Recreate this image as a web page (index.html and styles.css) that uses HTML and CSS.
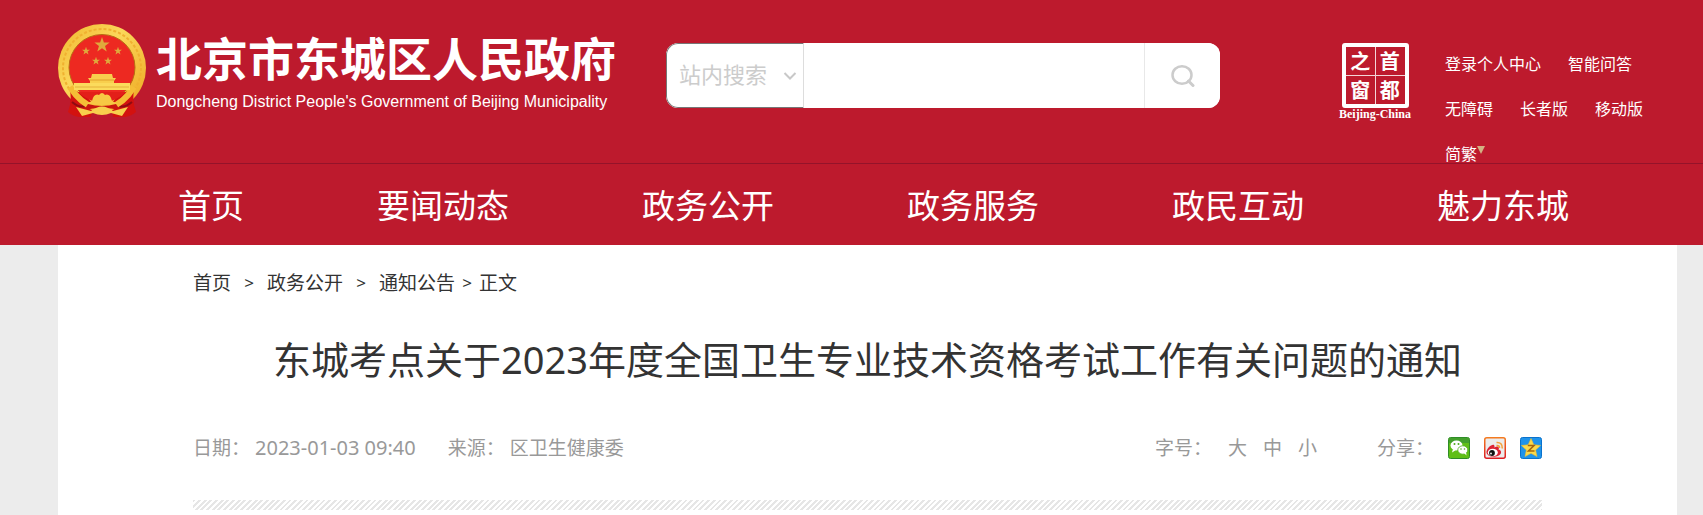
FILE: index.html
```html
<!DOCTYPE html>
<html lang="zh-CN">
<head>
<meta charset="utf-8">
<title>东城考点关于2023年度全国卫生专业技术资格考试工作有关问题的通知</title>
<link rel="stylesheet" href="styles.css">
</head>
<body>
<header class="site-header">
  <div class="header-top">
    <a class="brand" href="#">
      <svg class="emblem" viewBox="0 0 88 93" aria-hidden="true">
        <defs>
          <linearGradient id="gold" x1="0" y1="0" x2="1" y2="1">
            <stop offset="0" stop-color="#f0b62c"/><stop offset=".4" stop-color="#fbd75a"/><stop offset="1" stop-color="#eda61f"/>
          </linearGradient>
          <polygon id="star" points="0,-10 2.4,-3.2 9.5,-3.1 3.8,1.2 5.9,8.1 0,4 -5.9,8.1 -3.8,1.2 -9.5,-3.1 -2.4,-3.2"/>
        </defs>
        <circle cx="44" cy="44" r="44" fill="url(#gold)"/>
        <circle cx="44" cy="44" r="39" fill="none" stroke="#f0b030" stroke-width="2" stroke-dasharray="3 2"/>
        <path d="M12 66 Q26 67 35 80 L33 93 Q18 95 10 88 Q14 78 12 66 M76 66 Q62 67 53 80 L55 93 Q70 95 78 88 Q74 78 76 66" fill="#d3120f"/>
        <path d="M14 78 q7 6 13 4 M74 78 q-7 6 -13 4" fill="none" stroke="#8f0b12" stroke-width="2"/>
        <path d="M12 63 Q23 80 37 84 M76 63 Q65 80 51 84" fill="none" stroke="#f5bd36" stroke-width="6"/>
        <circle cx="44" cy="43.500" r="33" fill="#ed2921" stroke="#b96c13"/>
        <g fill="#dfa93c">
          <use href="#star" transform="translate(44 21) scale(.8)"/>
          <use href="#star" transform="translate(28 27) scale(.42)"/>
          <use href="#star" transform="translate(60 27) scale(.42)"/>
          <use href="#star" transform="translate(38 37) scale(.42)"/>
          <use href="#star" transform="translate(50 37) scale(.42)"/>
        </g>
        <path d="M34 50 h20 l1 4 h3 l-2 3 v3 h3 v5 H29 v-5 h3 v-3 l-2 -3 h3z" fill="#f8cf4d"/>
        <path d="M32 56 h24 M31 61 h26" stroke="#e0a02c"/>
        <path d="M16 59 H72 V66 H16z" fill="#fbdb5c"/><path d="M17 63 H71" stroke="#e5b03a"/>
        <path d="M20 68 H68 Q58 78 44 78 Q30 78 20 68z" fill="#e31f19"/>
        <path d="M34 77 Q36 69 41 71 Q44 67 47 71 Q52 69 54 77 L60 80 Q44 82 28 80z" fill="#f7c844"/>
        <path d="M30 80 Q44 84 58 80 L62 86 Q44 82 26 86z" fill="#c9160f"/>
        <path d="M18 83 L33 87 Q44 78 55 87 L70 83 L64 92 L53 89 Q44 93 35 89 L24 92z" fill="#f8cf4d"/>
      </svg>
      <span class="brand-text">
        <span class="brand-cn">北京市东城区人民政府</span>
        <span class="brand-en">Dongcheng District People's Government of Beijing Municipality</span>
      </span>
    </a>
    <form class="search" role="search">
      <span class="search-scope">
        <select class="scope-select" aria-label="搜索范围"><option>站内搜索</option></select>
        <svg class="chevron" viewBox="0 0 14 8" aria-hidden="true"><path d="M1.500 1 L7 6.500 L12.500 1" fill="none" stroke="#c8c8c8" stroke-width="2"/></svg>
      </span>
      <input class="search-input" type="text" aria-label="搜索关键词">
      <button class="search-button" type="button" aria-label="搜索">
        <svg class="search-icon" viewBox="0 0 24 24" aria-hidden="true"><ellipse cx="11" cy="11" rx="9.500" ry="8.800" fill="none" stroke="#ccc" stroke-width="2.500"/><path d="M17.500 17 L22 21.500" stroke="#ccc" stroke-width="3" stroke-linecap="round"/></svg>
      </button>
    </form>
    <a class="capital" href="#" aria-label="首都之窗">
      <span class="capital-grid"><span>之</span><span>首</span><span>窗</span><span>都</span></span>
      <span class="capital-en">Beijing-China</span>
    </a>
    <nav class="tools" aria-label="工具">
      <a href="#">登录个人中心</a>
      <a href="#">智能问答</a>
      <a href="#">无障碍</a>
      <a href="#">长者版</a>
      <a href="#">移动版</a>
      <a class="lang" href="#">简繁<svg class="lang-arrow" viewBox="0 0 8 8" aria-hidden="true"><path d="M0 0H8L4 8z" fill="#d3b283"/></svg></a>
    </nav>
  </div>
  <nav class="main-nav" aria-label="主导航">
    <a href="#">首页</a>
    <a href="#">要闻动态</a>
    <a href="#">政务公开</a>
    <a href="#">政务服务</a>
    <a href="#">政民互动</a>
    <a href="#">魅力东城</a>
  </nav>
</header>
<main class="page">
  <nav class="crumbs" aria-label="当前位置">
    <a href="#">首页</a><span class="sep">&gt;</span><a href="#">政务公开</a><span class="sep">&gt;</span><a href="#">通知公告</a><span class="sep sep-last">&gt;</span><span>正文</span>
  </nav>
  <h1 class="title">东城考点关于2023年度全国卫生专业技术资格考试工作有关问题的通知</h1>
  <div class="meta">
    <span class="meta-item">日期：<time class="date" datetime="2023-01-03T09:40">2023-01-03 09:40</time></span>
    <span class="meta-item">来源：<span>区卫生健康委</span></span>
    <span class="sizes">字号：<button type="button">大</button><button type="button">中</button><button type="button">小</button></span>
    <span class="share">分享：
      <a href="#" aria-label="微信">
        <svg viewBox="0 0 22 22"><rect x=".5" y=".5" width="21" height="21" rx="2" fill="#5fbf16" stroke="#2f8d27"/><path d="M1 1h20v5H1z" fill="#43a02c"/><ellipse cx="8.500" cy="8.500" rx="6" ry="5" fill="#fff"/><path d="M5 12 L4 15.500 L8 13z" fill="#fff"/><ellipse cx="14.800" cy="13" rx="5" ry="4.200" fill="#fff" stroke="#4eac1c" stroke-width=".8"/><path d="M16 16 L18.500 18.500 L18 15z" fill="#fff"/><g fill="#4eac1c"><circle cx="6.500" cy="7" r="1"/><circle cx="10.500" cy="7" r="1"/><circle cx="13" cy="12" r=".8"/><circle cx="16.500" cy="12" r=".8"/></g></svg>
      </a>
      <a href="#" aria-label="微博">
        <svg viewBox="0 0 22 22"><defs><linearGradient id="wb" x1="0" y1="0" x2="0" y2="1"><stop offset="0" stop-color="#f47b20"/><stop offset="1" stop-color="#dd1c22"/></linearGradient></defs><rect x=".75" y=".75" width="20.500" height="20.500" rx="2" fill="#ececec" stroke="url(#wb)" stroke-width="1.500"/><path d="M2.500 14.500 C3 11 8 6.500 10 8 Q11 9 10.300 10.500 Q14.500 8.500 15 11 L14.500 12.500 Q17.500 13 17 16 C16 20 5 22 2.500 16z" fill="#dc2233"/><ellipse cx="8.800" cy="15.500" rx="5" ry="3.800" fill="#fff"/><circle cx="8" cy="16" r="2.900" fill="#111"/><circle cx="7" cy="16.500" r=".9" fill="#fff"/><path d="M12.500 8.500 Q15.500 8 15.500 11 M12.500 5.500 Q18.500 5 18.300 11.500" fill="none" stroke="#f4a13c" stroke-width="1.600"/></svg>
      </a>
      <a href="#" aria-label="QQ空间">
        <svg viewBox="0 0 22 22"><rect x=".5" y=".5" width="21" height="21" rx="2" fill="#1f93ea" stroke="#0a72cc"/><path d="M11 1.500 L13.800 7.800 L20.500 8.500 L15.600 13 L17 19.500 L11 16.300 L5 19.500 L6.400 13 L1.500 8.500 L8.200 7.800z" fill="#fbd94b" stroke="#f0c02f" stroke-width=".6"/><path d="M7.800 8.500 H14 L8.500 14 H14.500" fill="none" stroke="#a5670c" stroke-width="1.600"/></svg>
      </a>
    </span>
  </div>
  <div class="stripe"></div>
</main>
</body>
</html>
```

FILE: styles.css
```css
* { box-sizing: border-box; }

body {
  margin: 0;
  min-height: 100vh;
  display: flex;
  flex-direction: column;
  background: #ececec;
  color: #333;
  font-family: "Noto Sans", "Noto Sans CJK SC", sans-serif;
}

a { color: inherit; text-decoration: none; }
svg { display: block; }

.site-header { background: #bd1a2d; color: #fff; }

.header-top {
  display: flex;
  align-items: flex-start;
  height: 163px;
  padding: 0 26px 0 58px;
}

.brand { display: flex; gap: 10px; margin-top: 24px; }
.emblem { width: 88px; height: 93px; }
.brand-text { display: flex; flex-direction: column; white-space: nowrap; }
.brand-cn {
  font: 700 46px/64px "Noto Sans CJK SC", sans-serif;
}
.brand-en {
  font: 16px/28px "Liberation Sans", Arial, sans-serif;
}

.search {
  display: flex;
  flex: 0 1 554px;
  height: 65px;
  margin: 43px auto 0 50px;
  border-radius: 12px;
  background: #fff;
  overflow: hidden;
}
.search-scope { position: relative; flex: 0 0 138px; }
.scope-select {
  appearance: none;
  width: 100%;
  height: 100%;
  padding: 0 12px 6px;
  border: 1px solid #767676;
  border-right-color: #ddd;
  border-radius: 12px 0 0 12px;
  background: #fff;
  color: #ccc;
  font: 22px "Noto Sans CJK SC", sans-serif;
}
.chevron { position: absolute; right: 7px; top: 29px; width: 14px; height: 8px; pointer-events: none; }
.search-input { flex: 1; min-width: 0; padding: 0 12px; border: 0; font-size: 20px; }
.search-button {
  flex: 0 0 76px;
  display: grid;
  place-items: center;
  padding: 0;
  border: 0;
  border-left: 1px solid #e8e8e8;
  background: #fff;
}
.search-icon { width: 24px; height: 24px; }

.capital {
  display: flex;
  flex-direction: column;
  align-items: center;
  width: 74px;
  margin-top: 43px;
}
.capital-grid {
  display: grid;
  grid-template-columns: 1fr 1fr;
  gap: 2px;
  width: 67px;
  height: 65px;
  padding: 1px;
  border: 4px solid #fff;
  border-radius: 3px;
  background: linear-gradient(#f3d5d8, #f3d5d8) center / 1px 100% no-repeat, linear-gradient(#f3d5d8, #f3d5d8) center / 100% 1px no-repeat;
}
.capital-grid span { font: 700 20px/26px "Noto Sans CJK SC", sans-serif; text-align: center; }
.capital-en { font: 700 12px/12px "Liberation Serif", serif; white-space: nowrap; }

.tools {
  display: flex;
  flex-wrap: wrap;
  align-content: flex-start;
  column-gap: 27px;
  width: 232px;
  margin: 41px 0 0 33px;
  font: 16px/45px "Noto Sans CJK SC", sans-serif;
}
.lang { display: flex; }
.lang-arrow { width: 8px; height: 8px; margin-top: 15px; }

.main-nav {
  display: flex;
  gap: 133px;
  padding: 0 26px 0 178px;
  border-top: 1px solid #94132a;
  font: 33px/81px "Noto Sans CJK SC", sans-serif;
  white-space: nowrap;
}

.page {
  flex: 1;
  margin: 0 26px 0 58px;
  padding: 0 135px;
  background: #fff;
}

.crumbs { display: flex; padding-top: 24px; font-size: 19px; line-height: 28px; }
.sep { width: 36px; text-align: center; font-size: 17px; }
.sep-last { width: 24px; }

.title {
  margin: 32px 0 0;
  font-size: 38px;
  font-weight: 400;
  line-height: 60px;
  text-align: center;
}

.meta {
  display: flex;
  align-items: center;
  margin-top: 44px;
  color: #999;
  font-size: 19px;
  line-height: 30px;
}
.meta-item { display: flex; gap: 5px; margin-right: 32px; }
.date { font-size: 20px; }
.sizes { display: flex; margin-left: auto; }
.sizes button {
  margin: 0 0 0 16px;
  padding: 0;
  border: 0;
  background: none;
  color: inherit;
  font: inherit;
}
.share { display: flex; align-items: center; gap: 14px; margin-left: 60px; }
.share svg { width: 22px; height: 22px; }

.stripe {
  height: 10px;
  margin-top: 37px;
  background: repeating-linear-gradient(135deg, #e6e6e6 0 2px, #fff 2px 4px);
}
```
